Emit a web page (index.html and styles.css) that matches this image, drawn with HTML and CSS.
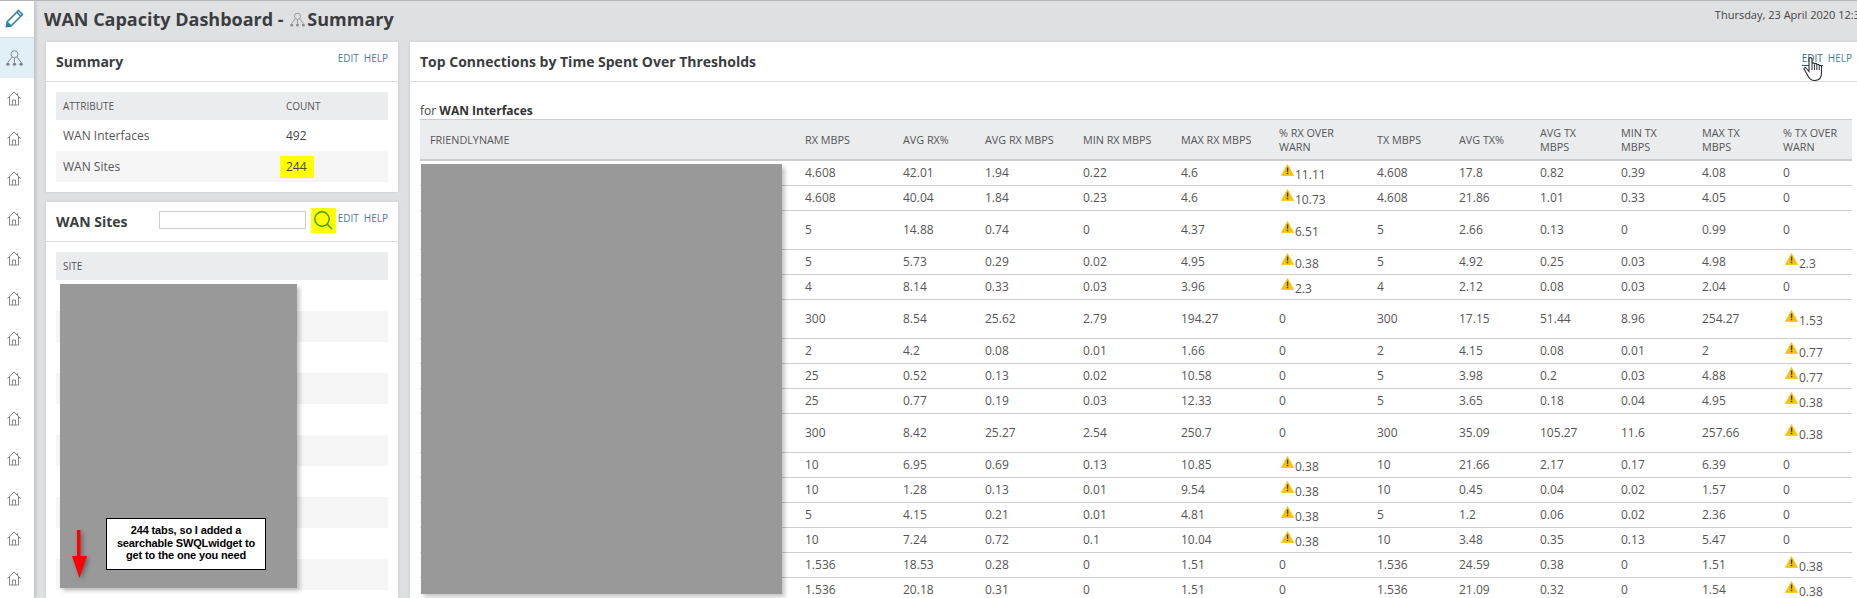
FILE: index.html
```html
<!DOCTYPE html>
<html lang="en">
<head>
<meta charset="utf-8">
<title>WAN Capacity Dashboard - Summary</title>
<link rel="stylesheet" href="styles.css">
</head>
<body>
<svg class="defs" width="0" height="0" aria-hidden="true">
  <symbol id="home" viewBox="0 0 14 15">
    <path d="M0.5 7.5 L7 1 L13.5 7.5 M2.5 6 V14 H11.5 V6 M5.5 14 V9 H8.5 V14 M10.5 2 V4" fill="none" stroke="#8a8a8a" stroke-width="1"/>
  </symbol>
  <symbol id="net" viewBox="0 0 18 18">
    <circle cx="9" cy="4.5" r="3.7" fill="none" stroke="currentColor" stroke-width="1"/>
    <path d="M6.5 7.5 L2 13 M11.5 7.5 L16 13 M9 8.5 V13" fill="none" stroke="currentColor" stroke-width="1"/>
    <circle cx="2" cy="15" r="1.8" fill="currentColor"/>
    <circle cx="9" cy="15" r="1.8" fill="currentColor"/>
    <circle cx="16" cy="15" r="1.8" fill="currentColor"/>
  </symbol>
  <symbol id="warn" viewBox="0 0 12 11">
    <path d="M6 0.3 L11.8 10.7 H0.2 Z" fill="#f5c211" stroke="#f5c211" stroke-width="0.5" stroke-linejoin="round"/>
    <rect x="5.4" y="3.2" width="1.3" height="4" fill="#4a3a00"/>
    <rect x="5.4" y="8" width="1.3" height="1.4" fill="#4a3a00"/>
  </symbol>
</svg>

<div class="app">
  <aside class="sidebar">
    <div class="side-top">
      <svg class="pencil" viewBox="0 0 19 19" width="19" height="19">
        <path d="M13.5 1.5 L17.5 5.5 L6 17 L2 13 Z M11.8 3.2 L15.8 7.2" fill="none" stroke="#2a7f9e" stroke-width="1.5"/>
        <path d="M0.5 18.5 L1.5 13 L6.5 17.8 Z" fill="#2a7f9e"/>
      </svg>
    </div>
    <div class="side-item active"><svg class="net-icon"><use href="#net"/></svg></div>
    <div class="side-item"><svg class="home-icon"><use href="#home"/></svg></div>
    <div class="side-item"><svg class="home-icon"><use href="#home"/></svg></div>
    <div class="side-item"><svg class="home-icon"><use href="#home"/></svg></div>
    <div class="side-item"><svg class="home-icon"><use href="#home"/></svg></div>
    <div class="side-item"><svg class="home-icon"><use href="#home"/></svg></div>
    <div class="side-item"><svg class="home-icon"><use href="#home"/></svg></div>
    <div class="side-item"><svg class="home-icon"><use href="#home"/></svg></div>
    <div class="side-item"><svg class="home-icon"><use href="#home"/></svg></div>
    <div class="side-item"><svg class="home-icon"><use href="#home"/></svg></div>
    <div class="side-item"><svg class="home-icon"><use href="#home"/></svg></div>
    <div class="side-item"><svg class="home-icon"><use href="#home"/></svg></div>
    <div class="side-item"><svg class="home-icon"><use href="#home"/></svg></div>
    <div class="side-item"><svg class="home-icon"><use href="#home"/></svg></div>
  </aside>

  <main class="main">
    <header class="titlebar">
      <h1 class="title">WAN Capacity Dashboard - <svg class="title-icon"><use href="#net"/></svg>Summary</h1>
      <div class="date">Thursday, 23 April 2020 12:3</div>
    </header>

    <div class="columns">
      <div class="col-left">
        <section class="panel">
          <div class="panel-head">
            <h2 class="panel-title">Summary</h2>
            <div class="links"><a class="link">EDIT</a><a class="link">HELP</a></div>
          </div>
          <div class="panel-body">
            <table class="list">
              <thead><tr><th class="attr">ATTRIBUTE</th><th>COUNT</th></tr></thead>
              <tbody>
                <tr><td>WAN Interfaces</td><td>492</td></tr>
                <tr><td>WAN Sites</td><td><span class="hl">244</span></td></tr>
              </tbody>
            </table>
          </div>
        </section>

        <section class="panel panel-fill panel-sites">
          <div class="panel-head">
            <h2 class="panel-title">WAN Sites</h2>
            <input class="search" type="text">
            <span class="search-btn">
              <svg viewBox="0 0 25 25" width="25" height="25">
                <circle cx="11" cy="11" r="7.2" fill="none" stroke="#3a9a10" stroke-width="1.4"/>
                <path d="M16 16 L21 21" stroke="#3a9a10" stroke-width="1.4"/>
              </svg>
            </span>
            <div class="links links-tight"><a class="link">EDIT</a><a class="link">HELP</a></div>
          </div>
          <div class="panel-body">
            <table class="list">
              <thead><tr><th>SITE</th></tr></thead>
              <tbody>
                <tr><td>&nbsp;</td></tr><tr><td>&nbsp;</td></tr><tr><td>&nbsp;</td></tr><tr><td>&nbsp;</td></tr><tr><td>&nbsp;</td></tr>
                <tr><td>&nbsp;</td></tr><tr><td>&nbsp;</td></tr><tr><td>&nbsp;</td></tr><tr><td>&nbsp;</td></tr><tr><td>&nbsp;</td></tr>
              </tbody>
            </table>
            <div class="redact redact-sites">
              <div class="callout">244 tabs, so I added a searchable SWQLwidget to get to the one you need</div>
              <svg class="arrow" viewBox="0 0 15 48" width="15" height="48">
                <path d="M5 0 H8.5 V26 H15 L7.5 48 L0 26 H5 Z" fill="#fb0007"/>
              </svg>
            </div>
          </div>
        </section>
      </div>

      <section class="panel panel-fill panel-wide">
        <div class="panel-head">
          <h2 class="panel-title">Top Connections by Time Spent Over Thresholds</h2>
          <div class="links"><a class="link hover">EDIT</a><a class="link">HELP</a></div>
          <svg class="cursor" viewBox="0 0 20 24" width="20" height="24">
            <path d="M6 14.5 L3 11 C2 10 .5 11.2 1.4 12.6 L5 19 C6.5 22 8.5 23.5 11.5 23.5 C16 23.5 18.5 21 18.5 16 V9.5 C18.5 8 16.2 8 16.2 9.5 V8.5 C16.2 7 13.8 7 13.8 8.5 V7.5 C13.8 6 11.4 6 11.4 7.5 V7 C11.4 5.5 9 5.5 9 7 V2 C9 .2 6 .2 6 2 Z" fill="#fff" stroke="#2b2f36" stroke-width="1.1"/>
            <path d="M9 7 V13 M11.4 7.5 V13 M13.8 8.5 V13 M16.2 9.5 V13" fill="none" stroke="#2b2f36" stroke-width="1"/>
          </svg>
        </div>
        <div class="panel-body panel-body-data">
          <div class="for">for <b>WAN Interfaces</b></div>
          <table class="data">
            <colgroup>
              <col class="c-name"><col class="c-a"><col class="c-t"><col class="c-a"><col class="c-a"><col class="c-a"><col class="c-a"><col class="c-t"><col class="c-b"><col class="c-b"><col class="c-b"><col class="c-b"><col class="c-e">
            </colgroup>
            <thead>
              <tr>
                <th>FRIENDLYNAME</th><th>RX MBPS</th><th>AVG RX%</th><th>AVG RX MBPS</th><th>MIN RX MBPS</th><th>MAX RX MBPS</th><th>% RX OVER WARN</th><th>TX MBPS</th><th>AVG TX%</th><th>AVG TX MBPS</th><th>MIN TX MBPS</th><th>MAX TX MBPS</th><th>% TX OVER WARN</th>
              </tr>
            </thead>
            <tbody>
              <tr><td></td><td>4.608</td><td>42.01</td><td>1.94</td><td>0.22</td><td>4.6</td><td><svg class="warn"><use href="#warn"/></svg><span class="over">11.11</span></td><td>4.608</td><td>17.8</td><td>0.82</td><td>0.39</td><td>4.08</td><td>0</td></tr>
              <tr><td></td><td>4.608</td><td>40.04</td><td>1.84</td><td>0.23</td><td>4.6</td><td><svg class="warn"><use href="#warn"/></svg><span class="over">10.73</span></td><td>4.608</td><td>21.86</td><td>1.01</td><td>0.33</td><td>4.05</td><td>0</td></tr>
              <tr class="tall"><td></td><td>5</td><td>14.88</td><td>0.74</td><td>0</td><td>4.37</td><td><svg class="warn"><use href="#warn"/></svg><span class="over">6.51</span></td><td>5</td><td>2.66</td><td>0.13</td><td>0</td><td>0.99</td><td>0</td></tr>
              <tr><td></td><td>5</td><td>5.73</td><td>0.29</td><td>0.02</td><td>4.95</td><td><svg class="warn"><use href="#warn"/></svg><span class="over">0.38</span></td><td>5</td><td>4.92</td><td>0.25</td><td>0.03</td><td>4.98</td><td><svg class="warn"><use href="#warn"/></svg><span class="over">2.3</span></td></tr>
              <tr><td></td><td>4</td><td>8.14</td><td>0.33</td><td>0.03</td><td>3.96</td><td><svg class="warn"><use href="#warn"/></svg><span class="over">2.3</span></td><td>4</td><td>2.12</td><td>0.08</td><td>0.03</td><td>2.04</td><td>0</td></tr>
              <tr class="tall"><td></td><td>300</td><td>8.54</td><td>25.62</td><td>2.79</td><td>194.27</td><td>0</td><td>300</td><td>17.15</td><td>51.44</td><td>8.96</td><td>254.27</td><td><svg class="warn"><use href="#warn"/></svg><span class="over">1.53</span></td></tr>
              <tr><td></td><td>2</td><td>4.2</td><td>0.08</td><td>0.01</td><td>1.66</td><td>0</td><td>2</td><td>4.15</td><td>0.08</td><td>0.01</td><td>2</td><td><svg class="warn"><use href="#warn"/></svg><span class="over">0.77</span></td></tr>
              <tr><td></td><td>25</td><td>0.52</td><td>0.13</td><td>0.02</td><td>10.58</td><td>0</td><td>5</td><td>3.98</td><td>0.2</td><td>0.03</td><td>4.88</td><td><svg class="warn"><use href="#warn"/></svg><span class="over">0.77</span></td></tr>
              <tr><td></td><td>25</td><td>0.77</td><td>0.19</td><td>0.03</td><td>12.33</td><td>0</td><td>5</td><td>3.65</td><td>0.18</td><td>0.04</td><td>4.95</td><td><svg class="warn"><use href="#warn"/></svg><span class="over">0.38</span></td></tr>
              <tr class="tall"><td></td><td>300</td><td>8.42</td><td>25.27</td><td>2.54</td><td>250.7</td><td>0</td><td>300</td><td>35.09</td><td>105.27</td><td>11.6</td><td>257.66</td><td><svg class="warn"><use href="#warn"/></svg><span class="over">0.38</span></td></tr>
              <tr><td></td><td>10</td><td>6.95</td><td>0.69</td><td>0.13</td><td>10.85</td><td><svg class="warn"><use href="#warn"/></svg><span class="over">0.38</span></td><td>10</td><td>21.66</td><td>2.17</td><td>0.17</td><td>6.39</td><td>0</td></tr>
              <tr><td></td><td>10</td><td>1.28</td><td>0.13</td><td>0.01</td><td>9.54</td><td><svg class="warn"><use href="#warn"/></svg><span class="over">0.38</span></td><td>10</td><td>0.45</td><td>0.04</td><td>0.02</td><td>1.57</td><td>0</td></tr>
              <tr><td></td><td>5</td><td>4.15</td><td>0.21</td><td>0.01</td><td>4.81</td><td><svg class="warn"><use href="#warn"/></svg><span class="over">0.38</span></td><td>5</td><td>1.2</td><td>0.06</td><td>0.02</td><td>2.36</td><td>0</td></tr>
              <tr><td></td><td>10</td><td>7.24</td><td>0.72</td><td>0.1</td><td>10.04</td><td><svg class="warn"><use href="#warn"/></svg><span class="over">0.38</span></td><td>10</td><td>3.48</td><td>0.35</td><td>0.13</td><td>5.47</td><td>0</td></tr>
              <tr><td></td><td>1.536</td><td>18.53</td><td>0.28</td><td>0</td><td>1.51</td><td>0</td><td>1.536</td><td>24.59</td><td>0.38</td><td>0</td><td>1.51</td><td><svg class="warn"><use href="#warn"/></svg><span class="over">0.38</span></td></tr>
              <tr><td></td><td>1.536</td><td>20.18</td><td>0.31</td><td>0</td><td>1.51</td><td>0</td><td>1.536</td><td>21.09</td><td>0.32</td><td>0</td><td>1.54</td><td><svg class="warn"><use href="#warn"/></svg><span class="over">0.38</span></td></tr>
            </tbody>
          </table>
          <div class="redact redact-names"></div>
        </div>
      </section>
    </div>
  </main>
</div>
</body>
</html>
```

FILE: styles.css
```css
* { box-sizing: border-box; }

html, body {
  margin: 0;
  height: 598px;
  overflow: hidden;
}

body {
  font-family: "Open Sans", "Liberation Sans", sans-serif;
  font-size: 12px;
  color: #444;
  background: #dfe0e2;
}

.defs { position: absolute; }

.app {
  display: flex;
  height: 598px;
  overflow: hidden;
  border-top: 1px solid #b4b5b8;
}

/* Sidebar */
.sidebar {
  flex: 0 0 34px;
  background: #fff;
  box-shadow: 1px 0 4px rgba(0, 0, 0, .22);
  position: relative;
  z-index: 1;
}

.side-top {
  height: 37px;
  border-bottom: 1px solid #d8d8d8;
  display: flex;
  align-items: center;
  justify-content: center;
  padding: 0 6px 2px 0;
}

.side-item {
  height: 40px;
  display: flex;
  align-items: center;
  justify-content: center;
  padding-right: 6px;
}

.side-item.active { background: #e1f0f6; }

.home-icon { width: 14px; height: 15px; }
.net-icon { width: 17px; height: 17px; color: #808488; }

/* Main */
.main {
  flex: 1;
  min-width: 0;
  overflow: hidden;
}

.titlebar {
  height: 41px;
  display: flex;
  justify-content: space-between;
  padding-left: 10px;
}

.title {
  margin: 0;
  font-size: 18px;
  font-weight: 700;
  line-height: 36px;
  color: #3b3d40;
  white-space: nowrap;
}

.title-icon {
  width: 15px;
  height: 16px;
  margin: 0 2px 0 2px;
  color: #8a8d90;
  vertical-align: -2px;
}

.date {
  font-size: 11px;
  line-height: 28px;
  color: #444;
  white-space: nowrap;
  margin-right: -3px;
}

.columns {
  display: grid;
  grid-template-columns: 352px 1452px;
  column-gap: 12px;
  padding-left: 12px;
  align-items: start;
}

.col-left {
  display: flex;
  flex-direction: column;
  gap: 10px;
}

/* Panels */
.panel {
  background: #fff;
  box-shadow: 0 0 3px rgba(0, 0, 0, .12);
}

.panel-fill { overflow: hidden; }
.panel-sites { height: 396px; }
.panel-wide { height: 556px; }

.panel-head {
  height: 40px;
  border-bottom: 1px solid #dcdcdc;
  padding: 0 10px;
  display: flex;
  align-items: center;
  position: relative;
}

.panel-title {
  margin: 0;
  font-size: 14px;
  font-weight: 700;
  color: #3b3d40;
  white-space: nowrap;
}

.links {
  margin-left: auto;
  align-self: flex-start;
  padding-top: 9px;
  display: flex;
  gap: 5px;
  font-size: 10px;
  line-height: 14px;
}

.links-tight { margin-left: 2px; }

.link { color: #3f7f9a; }

.link.hover {
  color: #2a6a86;
  border-bottom: 1px solid #1f5a74;
  height: 15px;
}

.cursor {
  position: absolute;
  left: 1393px;
  top: 15px;
}

.search {
  margin: 0 5px 0 auto;
  width: 147px;
  height: 18px;
  border: 1px solid #ccc;
  background: #fff;
  padding: 0;
  position: relative;
  top: -2px;
}

.search-btn {
  width: 25px;
  height: 25px;
  background: #ffff00;
  display: block;
  position: relative;
  top: -1px;
}

.search-btn svg { display: block; }

.panel-body {
  padding: 10px;
  position: relative;
}

.panel-body-data { padding-top: 20px; }

/* Left tables */
.list {
  width: 100%;
  border-collapse: collapse;
  table-layout: fixed;
}

.list th {
  height: 28px;
  background: #ebecee;
  font-size: 10px;
  font-weight: 400;
  text-align: left;
  padding: 0 7px;
  color: #555;
}

.list th.attr { width: 223px; }

.list td {
  height: 31px;
  padding: 0 7px;
  color: #555;
}

.list td:last-child { color: #444; }

.list tbody tr:nth-child(even) { background: #f5f5f5; }

.hl {
  display: inline-block;
  background: #ffff00;
  margin-left: -6px;
  padding: 0 7px 0 6px;
  line-height: 22px;
}

/* Redactions and annotations */
.redact {
  position: absolute;
  background: #999;
  box-shadow: 3px 3px 4px rgba(0, 0, 0, .22);
}

.redact-sites {
  left: 14px;
  top: 42px;
  width: 237px;
  height: 304px;
}

.redact-names {
  left: 11px;
  top: 82px;
  width: 361px;
  height: 430px;
}

.callout {
  position: absolute;
  left: 46px;
  top: 234px;
  width: 160px;
  height: 52px;
  background: #fff;
  border: 1px solid #000;
  font-family: "Liberation Sans", Arial, sans-serif;
  font-size: 11px;
  font-weight: 700;
  line-height: 12.5px;
  letter-spacing: -.15px;
  color: #000;
  text-align: center;
  padding: 5px 8px 0;
}

.arrow {
  position: absolute;
  left: 12px;
  top: 246px;
  filter: drop-shadow(2px 2px 2px rgba(0, 0, 0, .35));
}

/* Data table */
.for {
  height: 17px;
  line-height: 17px;
  font-size: 12px;
  color: #444;
}

.for b { color: #333; }

.data {
  border-collapse: separate;
  border-spacing: 0;
  table-layout: fixed;
  width: 1432px;
}

.c-name { width: 375px; }
.c-a { width: 98px; }
.c-t { width: 82px; }
.c-b { width: 81px; }
.c-e { width: 79px; }

.data th {
  height: 42px;
  background: #ebecee;
  border-top: 1px solid #ccc;
  border-bottom: 2px solid #ccc;
  font-size: 10.8px;
  font-weight: 400;
  line-height: 14px;
  text-align: left;
  color: #555;
  padding: 0 10px;
  overflow: hidden;
}

.data td {
  height: 25px;
  border-bottom: 1px solid #ccc;
  padding: 0 10px 1px;
  color: #555;
  white-space: nowrap;
}

.data tr.tall td { height: 39px; }

.warn {
  width: 13px;
  height: 12px;
  margin-left: 2px;
  vertical-align: 1px;
}

.over {
  margin-left: 1px;
  position: relative;
  top: 2px;
}
```
